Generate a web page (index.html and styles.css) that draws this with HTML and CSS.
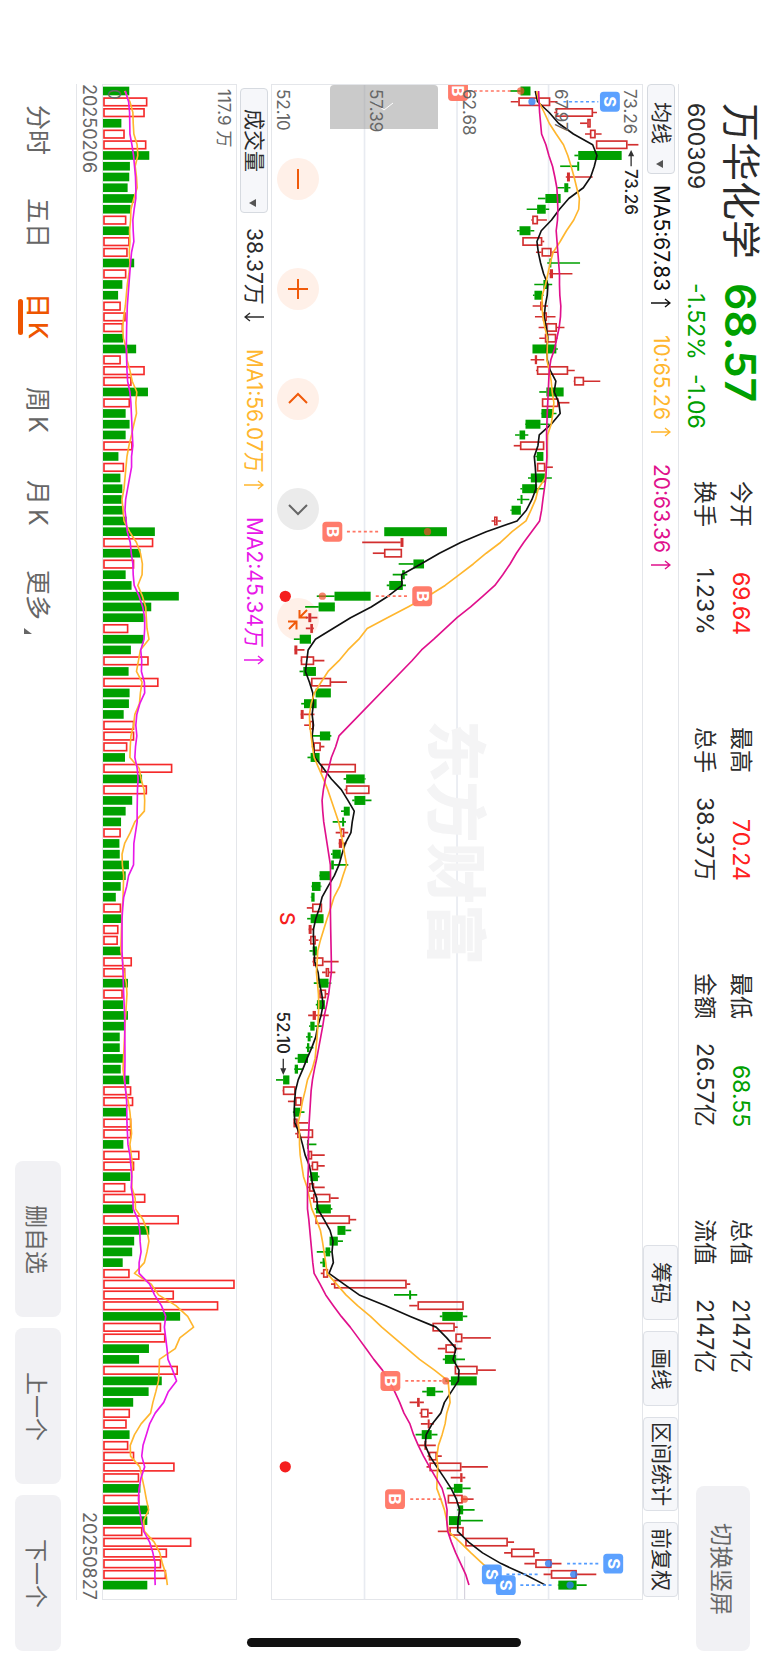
FILE: index.html
```html
<!DOCTYPE html>
<html lang="zh-CN">
<head>
<meta charset="utf-8">
<meta name="viewport" content="width=device-width, initial-scale=1">
<title>万华化学 600309</title>
<link rel="stylesheet" href="styles.css">
</head>
<body>
<div class="app">
  <header class="header">
    <div class="quote">
      <h1 class="quote-name">万华化学</h1>
      <span class="quote-price">68.57</span>
      <span class="quote-code">600309</span>
      <span class="quote-change"><span>-1.52%</span><span>-1.06</span></span>
    </div>
    <dl class="stats">
      <div class="stat"><dt>今开</dt><dd class="up">69.64</dd></div>
      <div class="stat"><dt>最高</dt><dd class="up">70.24</dd></div>
      <div class="stat"><dt>最低</dt><dd class="down">68.55</dd></div>
      <div class="stat"><dt>总值</dt><dd>2147亿</dd></div>
      <div class="stat"><dt>换手</dt><dd>1.23%</dd></div>
      <div class="stat"><dt>总手</dt><dd>38.37万</dd></div>
      <div class="stat"><dt>金额</dt><dd>26.57亿</dd></div>
      <div class="stat"><dt>流值</dt><dd>2147亿</dd></div>
    </dl>
    <button class="soft-button rotate-button" type="button">切换竖屏</button>
  </header>

  <main class="board">
    <div class="toolbar toolbar-price">
      <div class="picker">
        <select class="picker-select" aria-label="主图指标"><option>均线</option></select>
        <svg class="picker-arrow" viewBox="0 0 8 8" aria-hidden="true"><path d="M0 4 7 0V8Z"/></svg>
      </div>
      <span class="legend legend-ma5">MA5:67.83<svg class="trend" viewBox="0 0 20 10"><path d="M0 5H19M14 1 19 5 14 9"/></svg></span>
      <span class="legend legend-ma10">10:65.26<svg class="trend" viewBox="0 0 20 10"><path d="M0 5H19M14 1 19 5 14 9"/></svg></span>
      <span class="legend legend-ma20">20:63.36<svg class="trend" viewBox="0 0 20 10"><path d="M0 5H19M14 1 19 5 14 9"/></svg></span>
      <div class="tools">
        <button class="tool" type="button">筹码</button>
        <button class="tool" type="button">画线</button>
        <button class="tool" type="button">区间统计</button>
        <button class="tool" type="button">前复权</button>
      </div>
    </div>

    <section class="panel panel-price" aria-label="K线图">
      <div class="controls">
        <button class="round" type="button" aria-label="缩小"><svg viewBox="-21 -21 42 42"><path d="M0-10V10"/></svg></button>
        <button class="round" type="button" aria-label="放大"><svg viewBox="-21 -21 42 42"><path d="M0-10V10M-10 0H10"/></svg></button>
        <button class="round" type="button" aria-label="向前"><svg viewBox="-21 -21 42 42"><path d="M-9 4 0-5 9 4"/></svg></button>
        <button class="round round-off" type="button" aria-label="向后"><svg viewBox="-21 -21 42 42"><path d="M-9-4 0 5 9-4"/></svg></button>
        <button class="round" type="button" aria-label="收起"><svg viewBox="-21 -21 42 42"><path d="M9-9 1.500-1.500M1.500-9V-1.500H9M-9 10-1.500 2.500M-10 2.500H-1.500V10.500"/></svg></button>
      </div>
      <svg class="plot" id="price" viewBox="0 0 1116 4548" preserveAspectRatio="none" aria-hidden="true"></svg>
      <button class="drawer" type="button" aria-label="展开"><svg viewBox="0 0 20 10"><path d="M1 1 10 8 19 1"/></svg></button>
      <span class="scale scale-0">52.10</span>
      <span class="scale scale-1">57.39</span>
      <span class="scale scale-2">62.68</span>
      <span class="scale scale-3">67.97</span>
      <span class="scale scale-4">73.26</span>
    </section>

    <div class="toolbar toolbar-volume">
      <div class="picker picker-wide">
        <select class="picker-select" aria-label="副图指标"><option>成交量</option></select>
        <svg class="picker-arrow" viewBox="0 0 8 8" aria-hidden="true"><path d="M0 4 7 0V8Z"/></svg>
      </div>
      <span class="legend legend-vol">38.37万<svg class="trend" viewBox="0 0 20 10"><path d="M20 5H1M6 1 1 5 6 9"/></svg></span>
      <span class="legend legend-ma10">MA1:56.07万<svg class="trend" viewBox="0 0 20 10"><path d="M0 5H19M14 1 19 5 14 9"/></svg></span>
      <span class="legend legend-vma">MA2:45.34万<svg class="trend" viewBox="0 0 20 10"><path d="M0 5H19M14 1 19 5 14 9"/></svg></span>
    </div>

    <section class="panel panel-volume" aria-label="成交量图">
      <svg class="plot" id="volume" viewBox="0 0 405 4548" preserveAspectRatio="none" aria-hidden="true"></svg>
      <span class="scale scale-zero">0</span>
      <span class="scale scale-4">117.9 万</span>
    </section>

    <div class="dates"><span>20250206</span><span>20250827</span></div>
  </main>

  <footer class="footer">
    <nav class="tabs">
      <a class="tab" href="#minute">分时</a>
      <a class="tab" href="#five">五日</a>
      <a class="tab tab-on" href="#day">日<span class="tab-k">K</span></a>
      <a class="tab" href="#week">周<span class="tab-k">K</span></a>
      <a class="tab" href="#month">月<span class="tab-k">K</span></a>
      <a class="tab" href="#more">更多<svg class="tab-more" viewBox="0 0 8 6" aria-hidden="true"><path d="M0 0 8 6H0Z"/></svg></a>
    </nav>
    <div class="actions">
      <button class="soft-button" type="button">删自选</button>
      <button class="soft-button" type="button">上一个</button>
      <button class="soft-button" type="button">下一个</button>
    </div>
  </footer>
  <div class="home-bar"></div>
</div>
<script src="chart.js"></script>
</body>
</html>
```

FILE: styles.css
```css
* { box-sizing: border-box; }

body {
  margin: 0;
  background: #fff;
  color: #2b2b2b;
  font-family: Inter, "Noto Sans CJK SC", sans-serif;
  writing-mode: vertical-rl;
  text-orientation: sideways;
}

button, select {
  margin: 0;
  font: inherit;
  color: inherit;
  writing-mode: inherit;
  text-orientation: inherit;
  appearance: none;
  border: 0;
}

button svg { display: block; }

.app {
  position: relative;
  display: flex;
  flex-direction: column;
  width: 100vw;
  height: 100vh;
  overflow: hidden;
}

.header {
  display: flex;
  align-items: flex-start;
  block-size: 89px;
  padding-inline: 103px 11px;
}

.quote {
  display: grid;
  grid-template-columns: 180px 198px;
  row-gap: 10px;
  padding-block-start: 7px;
  white-space: nowrap;
}

.quote-name {
  margin: 0;
  font-size: 39px;
  font-weight: 400;
  line-height: 40px;
}

.quote-price {
  color: #00a000;
  font-size: 43px;
  font-weight: 600;
  line-height: 40px;
}

.quote-code { font-size: 23px; line-height: 30px; }

.quote-change {
  display: flex;
  gap: 14px;
  color: #00a000;
  font-size: 23px;
  line-height: 30px;
}

.stats {
  flex: 1;
  display: grid;
  grid-template-columns: repeat(4, 154px);
  justify-content: space-between;
  row-gap: 6px;
  margin: 0;
  margin-inline-end: 113px;
  padding-block-start: 12px;
}

.stat {
  display: flex;
  justify-content: space-between;
  font-size: 23px;
  line-height: 30px;
  white-space: nowrap;
}

.stat dd { margin: 0; }
.stat .up { color: #ff2020; }
.stat .down { color: #00a000; }

.soft-button {
  block-size: 46px;
  inline-size: 156px;
  padding: 0;
  border-radius: 8px;
  background: #f1f1f4;
  color: #666;
  font-size: 23px;
}

.rotate-button {
  block-size: 54px;
  inline-size: 165px;
  margin-block-start: 18px;
}

.board {
  flex: 1;
  display: flex;
  flex-direction: column;
  margin-inline: 84px 62px;
  border-block: 1px solid #e4e6ea;
}

.toolbar {
  display: flex;
  align-items: center;
  font-size: 21px;
  line-height: 28px;
  white-space: nowrap;
}

.toolbar-price { block-size: 35px; }
.toolbar-volume { block-size: 34px; padding-inline-start: 4px; }

.picker {
  position: relative;
  inline-size: 90px;
  margin-inline-end: 11px;
}

.picker-wide { inline-size: 125px; margin-inline-end: 15px; }

.picker-select {
  display: block;
  inline-size: 100%;
  block-size: 28px;
  padding-block: 0;
  padding-inline: 17px 20px;
  border: 1px solid #d6dae0;
  border-radius: 4px;
  background: #f6f7fa;
  font-size: 21px;
  line-height: 26px;
}

.picker-wide .picker-select { padding-inline-start: 20px; }

.picker-arrow {
  position: absolute;
  inset-inline-end: 6px;
  inset-block-start: 11px;
  width: 8px;
  height: 8px;
  fill: #555;
}

.legend {
  display: flex;
  align-items: center;
  gap: 7px;
  margin-inline-end: 27px;
}

.trend {
  width: 20px;
  height: 10px;
  fill: none;
  stroke: currentColor;
  stroke-width: 1.4;
}

.legend-ma5 { color: #111; }
.legend-ma10 { color: #ffb62e; }
.legend-ma20 { color: #e0108c; }
.legend-vma { color: #e818e8; }

.tools {
  display: flex;
  gap: 11px;
  margin-inline: auto 3px;
}

.tool {
  min-inline-size: 75px;
  block-size: 35px;
  padding-block: 0;
  padding-inline: 4px;
  border: 1px solid #dde0e6;
  border-radius: 4px;
  background: #f6f7fa;
  font-size: 21px;
  line-height: 30px;
}

.panel {
  position: relative;
  border: 1px solid #e4e6ea;
  overflow: hidden;
}

.panel-price { flex: 373; }
.panel-volume { flex: 134; }

.plot {
  position: absolute;
  inset: 0;
  width: 100%;
  height: 100%;
  writing-mode: horizontal-tb;
  pointer-events: none;
}

.controls {
  position: absolute;
  left: 5px;
  top: 73px;
  display: flex;
  gap: 68px;
}

.round {
  width: 42px;
  height: 42px;
  padding: 0;
  border-radius: 50%;
  background: #fff0e8;
}

.round path { fill: none; stroke: #f05a0a; stroke-width: 2; }
.round-off { background: #ebebeb; }
.round-off path { stroke: #666; }

.scale {
  position: absolute;
  top: 4px;
  color: #666;
  font-size: 17px;
  line-height: 20px;
}

.scale-0 { left: 1px; }
.scale-1 { left: calc(25% + 2px); }
.scale-2 { left: calc(50% + 2px); }
.scale-3 { left: calc(75% + 2px); }
.scale-4 { right: 2px; }
.scale-zero { left: 1px; }

.drawer {
  position: absolute;
  left: 58px;
  top: 0;
  display: grid;
  place-items: center;
  width: 108px;
  height: 44px;
  padding: 0;
  border-radius: 4px 4px 0 0;
  background: rgba(150, 150, 150, .5);
}

.drawer svg { width: 20px; height: 10px; }
.drawer path { fill: none; stroke: #fff; stroke-width: 1; }

.dates {
  display: flex;
  justify-content: space-between;
  color: #666;
  font-size: 18px;
  line-height: 25px;
}

.footer {
  display: flex;
  justify-content: space-between;
  align-items: center;
  block-size: 76px;
  padding-inline: 84px 11px;
}

.tabs {
  display: grid;
  grid-template-columns: repeat(6, 93px);
}

.tab {
  position: relative;
  color: #666;
  font-size: 25px;
  line-height: 40px;
  text-align: center;
  text-decoration: none;
}

.tab-k { margin-inline-start: 4px; }

.tab-on { color: #ee5500; font-weight: 500; }

.tab-on::after {
  content: "";
  position: absolute;
  left: 0;
  top: 29px;
  width: 5px;
  height: 36px;
  border-radius: 3px;
  background: #ee5500;
}

.tab-more {
  position: absolute;
  left: 6px;
  bottom: 8px;
  width: 8px;
  height: 6px;
  fill: #666;
}

.actions { display: flex; gap: 11px; }

.home-bar {
  position: absolute;
  bottom: 15px;
  left: 50%;
  width: 274px;
  height: 9px;
  margin-left: -137px;
  border-radius: 5px;
  background: #111;
}

.grid { stroke: #e8ebf1; stroke-width: 5; }
.cost { stroke: #cfcbd8; stroke-width: 3; }
.watermark { fill: #f4f4f5; font-size: 184px; font-weight: 900; }
.candle-up { fill: none; stroke: #d22f2f; stroke-width: 5; }
.candle-down { fill: #00a000; stroke: #00a000; stroke-width: 5; }
.bar-up { fill: #fff; stroke: #f52a2a; stroke-width: 5; }
.bar-down { fill: #00a000; }
.line { fill: none; stroke-width: 5; stroke-linejoin: round; }
.line-ma5 { stroke: #111; }
.line-ma10 { stroke: #ffb62e; }
.line-ma20 { stroke: #e0108c; }
.line-vma { stroke: #e818e8; }
.buy { fill: #ff7563; stroke: #ff7563; }
.sell { fill: #539cff; stroke: #539cff; }
.badge { stroke: none; fill-opacity: .95; }
.lead { fill: none; stroke-width: 5; stroke-dasharray: 9 8; }
.dot { stroke: none; fill: #f2502f; fill-opacity: .7; }
.dot-sell { stroke: none; fill: #2f7cf0; fill-opacity: .8; }
.badge-text { fill: #fff; font-size: 50px; font-weight: 700; text-anchor: middle; }
.event { fill: #f51e1e; }
.event-text { fill: #f51e1e; font-size: 62px; font-weight: 500; text-anchor: middle; }
.peak { fill: #222; font-size: 51px; font-weight: 500; }
.peak-arrow { fill: #333; stroke: #333; stroke-width: 4; }
```

FILE: chart.js
```js
const STEP = 32.29;
const FIRST = 18;
const at = i => FIRST + STEP * i;

// Each candle: colour, low, body start, body end, high; "from" shifts a whole run.
const candles = [
  { from: 339, rows: `g 379 411 440 440|r 381 404 500 522|r 512 517 629 641|r 590 612 622 622|r 605 620 637 655
|r 638 638 733 766|g 573 585 715 715|g 530 582 586 586|r 547 551 559 628|g 521 543 554 561|g 463 486 531 531
|g 429 461 486 497|r 443 446 463 490|g 400 408 440 452|r 416 416 476 482|r 457 474 504 522|g 491 498 502 590
|r 497 499 508 567|g 452 480 492 506|g 448 453 475 480|r 447 470 478 493|r 454 478 490 516|r 465 488 520 543
|r 467 484 518 522|g 447 447 518 523|r 441 454 460 482|r 457 460 554 574|r 571 572 602 651|g 467 489 540 540
|r 475 475 525 558|g 472 474 507 519|g 424 426 470 498|g 394 408 424 434|r 390 409 482 482|g 455 460 479 479
|r 460 460 485 508|g 433 442 484 505|g 410 416 460 484|g 400 411 415 437|g 380 384 411 411|r 323 331 341 352` },
  { from: -63, rows: `g 402 402 590 590|r 335 451 459 459|r 367 401 455 455|g 445 490 521 521|g 427 456 463 471
|g 409 417 457 467|g 198 252 360 360|g 163 204 252 253|r 165 173 181 200|r 165 179 186 189|g 129 147 180 180
|r 130 131 139 161|r 149 150 190 221|g 146 158 195 195|r 180 181 241 289|g 195 195 240 240|g 151 160 197 197
|r 149 150 158 191|r 160 176 188 188` },
  { from: -543, rows: `g 664 688 718 722|r 663 668 690 701|g 650 660 686 686|r 691 691 796 796|g 759 767 822 825
|r 762 766 837 837|g 785 792 824 843|g 751 760 777 777|g 726 755 760 766|r 735 750 761 773|r 744 745 754 768
|g 721 726 750 750|g 721 722 729 773|g 685 687 719 719|g 662 664 689 692|g 660 662 671 671|r 648 664 694 694
|g 649 660 698 698|r 653 654 662 670|r 654 658 675 683|g 656 666 678 678|r 665 667 698 744|r 694 705 715 734
|g 669 684 713 722|r 684 686 706 712|g 675 679 702 702|r 652 666 675 714|g 655 659 671 693|g 646 651 659 665
|g 645 649 655 668|g 612 621 651 651|g 610 612 621 637|g 555 577 595 595|r 575 576 614 614|r 591 613 632 632
|g 606 609 627 641|r 607 608 620 652|r 613 619 667 667|g 648 649 653 677|r 650 652 664 702|r 660 663 682 702
|g 655 659 681 686|r 651 655 670 702|r 660 667 719 744|g 672 676 720 725|r 674 674 778 797|g 741 741 764 782
|g 717 717 741 757|g 678 705 718 722|g 688 696 703 706|r 690 697 712 712|r 721 730 949 960|g 911 957 961 981
|r 957 982 1121 1121|g 1049 1057 1118 1132|r 1027 1027 1094 1103|r 1096 1096 1117 1203|r 1043 1066 1097 1115
|g 1058 1065 1098 1125|r 1094 1094 1163 1218|g 1066 1083 1160 1160|g 996 1010 1035 1059|r 958 981 988 1001
|r 988 992 1015 1027|r 992 1013 1018 1031|g 976 995 1024 1042|r 984 1003 1007 1037|r 1012 1016 1040 1055
|r 1009 1018 1114 1194|r 1082 1111 1117 1126|g 1070 1092 1117 1142|r 1073 1073 1118 1151|g 1102 1106 1119 1154
|g 1077 1077 1112 1179|r 1043 1078 1121 1121` },
  { from: 327, rows: `r 255 256 384 403|r 373 394 465 479|r 434 467 516 546|r 492 514 592 651|g 535 537 591 622` }
];

// Averages: runs of [first index, shift, values]; "-" leaves an index out.
const ma5 = [
  [0, 339, `455 462 497 525 570 628 641 633 622 600 556 528 504 473 460 464 471 480 493 491 485 482 488 493 489 491
500 517 512 526 530 503 467 463 452 455 457 457 445 428 400 307 230 166 110 52 53`],
  [47, -63, `413 362 300 247 194 172 168 164 176 186`],
  [57, -543, `668 664 668 664 668 672 698 722 752 772 791 785 781 764 754 745 731 712 694 686 675 668 668 670 672 682
686 693 697 691 681 675 663 649 636 622 614 611 610 612 626 635 643 656 662 666 678 681 700 718 727 724 728 715 760
806 886 960 1038 1070 1098 1089 1107 1105 1084 1063 1052 1026 1008 1005 1019 1040 1062 1083 1099 1109 1104 1103
1136 1178 1234 1304 1368`]
];
const ma10 = [
  [0, 339, `459 466 482 497 518 540 553 563 572 580 588 586 571 549 530 509 500 493 486 476 475 478 484 492 491 490
497 503 506 511 508 503 492 491 491 488 485 464 456 442 427 385 350 307 268 226`],
  [46, -63, `585 533 473 411 350 325 292 265`],
  [54, -543, `712 691 671 661 656 657 661 665 670 684 698 711 722 733 744 751 757 762 768 757 747 730 720 709 699 689
681 679 677 680 683 684 683 681 679 676 673 664 650 643 635 629 622 626 626 628 633 638 649 656 663 677 689 695 700
705 709 738 766 801 840 874 912 950 988 1033 1074 1077 1080 1070 1065 1056 1045 1040 1043 1041 1040 1052 1063 1070
1075 1110 1143 1178 1215 1248`]
];
const ma20 = [
  [0, 339, `465 - 468 - 474 487 496 507 514 520 522 523 522 518 - 523 - 528 528 529 532 531 527 520 513 502
497 - 494 - 491 - 489 - 490 - 487 - 478 474 468 444 420 398 379 357 333 297 260 219 184 149 112 83`],
  [60, -543, `745 735 722 714 704 698 694 696 699 - 709 - 719 - 720 - 719 - 720 - - 722 722 - 714 708 701 696
690 684 678 671 665 661 - - 655 - 652 - 653 - 650 - 650 654 - 660 - 666 670 688 705 728 752 779 803 827 850 876
896 913 928 941 959 970 984 1000 1018 1037 1056 1065 1071 1070 1073 1084 1097 1112 1127 1137`]
];

const volumes = [
  [-306, `g386 r441 r433 g362 r372 r438 g447 g388 g386 g381 g401 g390 r377 g385 r387 r381 g401 r377 g365 g352 r360
r375 r367 g367 g407 r360 r433 r393 g443 r388 g375 g387 g375 r396 g353 r370 g359 g365 g363 g368 g378 g464 r459 g420
r401 g375 g393 g537 g453 g430 r383 g430 g391 r445 g384`],
  [-36, `r205 g117 g115 g99 r131 r131 r110 g103 r247 g155 r170 g125 g105 g91 r90 g86 g87 g115 g105 g90 g75 r91 g92
r83 r81 g91 r124 r104 g112 r96 g98 g112 g102 g87 g87 g99 g90 g116 r122 r128 g107 r122 r122 g98 r147 r131 g119 r104
r165 g128 r267 g177 g131 g125 g96 r117 r437 r252 r387 g271 r213 r226 g176 g146 r264 g215 g175 g128 r118 r108 g117
r113 r131 r254 r146 g150 r147 g175 g171 r156 r305 r231 r213 r228 g171`]
];
const vma1 = [
  [0, -306, `372 388 397 398 400 410 412 404 408 410 400 391 390 387 388 386 388 385 380 377 374 369 366 368 378 379
388 395 409 406 408 400 393 385 379 376 373 370 364 367 370 387 408 420 426 425 412 426 436 438 440 446 420 414`],
  [54, -36, `138 155 150 147 133 129 121 119 118 146 152 161 163 162 133 119 102 94 95 99 - 97 95 - 92 - 90 96 100
107 109 107 - 103 - 100 - 97 - 105 113 118 121 123 118 122 126 123 124 134 135 158 170 176 170 162 132 183 205 258
294 312 270 256 208 207 205 197 188 181 152 132 119 120 148 155 162 168 175 160 162 192 209 217 228 232`]
];
const vma2 = [
  [0, -306, `374 384 387 - 388 394 399 402 405 406 406 401 397 398 400 393 390 - 385 - 380 - 378 - 377 - 379 381 388
391 - 394 - 397 393 393 - 381 375 373 - 380 389 392 397 398 401 416 427 433 433 431 421 424`],
  [54, -36, `153 162 163 148 139 136 139 135 133 140 143 141 - 140 140 135 130 - 129 114 108 99 96 94 - - 94 - 97 -
99 - 102 - - - 103 - 102 - 108 - 109 - 112 118 - 124 122 127 128 143 148 149 152 146 146 178 193 214 227 223 227
231 234 248 260 235 221 195 178 168 158 154 163 152 146 144 147 153 160 178 188 195 194 195`]
];

// Trades: kind, candle index, badge position, lead start and end, dot.
const trades = [
  ['B', 0, 561, 592, 720, 750], ['S', 1, 1019, 879, 984, 784],
  ['B', 41, 182, 226, 328, 469], ['B', 47, 453, 313, 414, 152],
  ['B', 120, 357, 402, 512, 524], ['B', 131, 371, 417, 515, 580],
  ['S', 137, 1029, 890, 988, 834], ['S', 138, 663, 707, 808, 910], ['S', 139, 705, 749, 848, 899]
];

const linePoints = runs => runs.flatMap(([first, from, values]) =>
  values.trim().split(/\s+/)
    .map((v, k) => v === '-' ? null : `${+v + from},${at(first + k).toFixed(1)}`)
    .filter(Boolean)).join(' ');
const line = (name, runs) => `<polyline class="line line-${name}" points="${linePoints(runs)}"/>`;
const sideText = (cls, x, y, text) =>
  `<text class="${cls}" transform="translate(${x} ${y}) rotate(90)">${text}</text>`;

function drawPrice() {
  let out = [279, 558, 834].map(x => `<path class="grid" d="M${x} 0V4548"/>`).join('');
  out += sideText('watermark', 487, 1908, '东方财富');
  let i = 0;
  for (const run of candles) {
    for (const row of run.rows.split('|')) {
      const [c, ...n] = row.trim().split(/\s+/);
      const [low, a, b, high] = n.map(v => +v + run.from);
      const y = at(i++);
      const w = Math.max(b - a - 4, 1);
      out += `<g class="candle-${c === 'r' ? 'up' : 'down'}">` +
        `<path d="M${low} ${y}H${a}M${b} ${y}H${high}"/>` +
        `<rect x="${a + 2}" y="${y - 11}" width="${w}" height="22"/></g>`;
    }
  }
  out += '<path class="cost" d="M581 4420V4548"/>';
  out += line('ma5', ma5) + line('ma10', ma10) + line('ma20', ma20);
  for (const [kind, index, badge, start, end, dot] of trades) {
    const y = at(index);
    const sell = kind === 'S';
    out += `<g class="${sell ? 'sell' : 'buy'}"><path class="lead" d="M${start} ${y}H${end}"/>` +
      `<circle class="${sell ? 'dot-sell' : 'dot'}" cx="${dot}" cy="${y}" r="11"/>` +
      `<rect class="badge" x="${badge - 30}" y="${y - 30}" width="60" height="60" rx="11"/></g>` +
      sideText('badge-text', badge - 17, y, kind);
  }
  out += '<circle class="event" cx="40" cy="1536" r="17"/><circle class="event" cx="40" cy="4151" r="17"/>';
  out += sideText('event-text', 25, 2504, 'S');
  out += sideText('peak', 1065, 252, '73.26') +
    '<path class="peak-arrow" d="M1083 244V205M1077 212 1083 200 1089 212Z"/>';
  out += sideText('peak', 16, 2783, '52.10') +
    '<path class="peak-arrow" d="M34 2925V2964M28 2956 34 2969 40 2956Z"/>';
  document.getElementById('price').innerHTML = out;
}

function drawVolume() {
  let out = '';
  let i = 0;
  for (const [from, list] of volumes) {
    for (const item of list.trim().split(/\s+/)) {
      const end = +item.slice(1) + from;
      const y = at(i++);
      out += item[0] === 'r'
        ? `<rect class="bar-up" x="3" y="${y - 11}" width="${end - 5}" height="23"/>`
        : `<rect class="bar-down" x="0" y="${y - 13}" width="${end}" height="26"/>`;
    }
  }
  out += line('ma10', vma1) + line('vma', vma2);
  document.getElementById('volume').innerHTML = out;
}

drawPrice();
drawVolume();
```
